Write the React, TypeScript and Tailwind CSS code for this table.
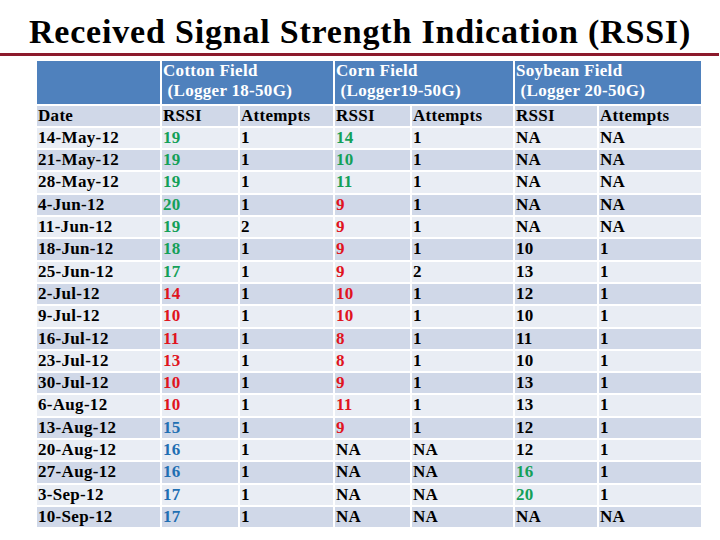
type Cell = { v: string; c?: "g" | "r" | "b" };

const GREEN = "text-[#14a058]";
const RED = "text-[#e0141e]";
const BLUE = "text-[#1f6fb2]";

const dates = [
  "14-May-12", "21-May-12", "28-May-12", "4-Jun-12", "11-Jun-12", "18-Jun-12",
  "25-Jun-12", "2-Jul-12", "9-Jul-12", "16-Jul-12", "23-Jul-12", "30-Jul-12",
  "6-Aug-12", "13-Aug-12", "20-Aug-12", "27-Aug-12", "3-Sep-12", "10-Sep-12",
];

const mk = (list: string, color: (i: number) => Cell["c"]) =>
  list.split(",").map((v, i) => ({ v, c: color(i) }));

const cottonRssi = mk("19,19,19,20,19,18,17,14,10,11,13,10,10,15,16,16,17,17", (i) =>
  i < 7 ? "g" : i < 13 ? "r" : "b"
);
const cottonAtt = mk("1,1,1,1,2,1,1,1,1,1,1,1,1,1,1,1,1,1", () => undefined);
const cornRssi = mk("14,10,11,9,9,9,9,10,10,8,8,9,11,9,NA,NA,NA,NA", (i) =>
  i < 3 ? "g" : i < 14 ? "r" : undefined
);
const cornAtt = mk("1,1,1,1,1,1,2,1,1,1,1,1,1,1,NA,NA,NA,NA", () => undefined);
const soyRssi = mk("NA,NA,NA,NA,NA,10,13,12,10,11,10,13,13,12,12,16,20,NA", (i) =>
  i === 15 || i === 16 ? "g" : undefined
);
const soyAtt = mk("NA,NA,NA,NA,NA,1,1,1,1,1,1,1,1,1,1,1,1,NA", () => undefined);

function colorClass(c?: Cell["c"]) {
  if (c === "g") return GREEN;
  if (c === "r") return RED;
  if (c === "b") return BLUE;
  return "text-black";
}

function Field({ name, logger }: { name: string; logger: string }) {
  return (
    <div className="col-span-2 h-[42.6px] bg-[#4f81bd] pl-[1px] text-white whitespace-pre">
      <div>{name}</div>
      <div>{logger}</div>
    </div>
  );
}

export default function App() {
  const sub = "h-[20.3px] bg-[#d0d8e8] pl-[1px]";
  return (
    <div className="w-[720px] h-[540px] bg-white overflow-hidden [font-family:Liberation_Serif,Times_New_Roman,serif]">
      <h1 className="pt-[15px] text-center text-[34px] leading-[34px] font-bold tracking-[0.8px] text-black">
        Received Signal Strength Indication (RSSI)
      </h1>
      <div className="mt-[4px] h-[3px] w-[719px] bg-[#8c1a2c]" />
      <div className="ml-[37px] mt-[5px] grid grid-cols-[123px_76px_93px_75px_101px_82px_102px] gap-[2px] text-[17px] leading-[20px] font-bold tracking-[0.3px]">
        <div className="h-[42.6px] bg-[#4f81bd]" />
        <Field name="Cotton Field" logger=" (Logger 18-50G)" />
        <Field name="Corn Field" logger=" (Logger19-50G)" />
        <Field name="Soybean Field" logger=" (Logger 20-50G)" />

        <div className={sub}>Date</div>
        <div className={sub}>RSSI</div>
        <div className={sub}>Attempts</div>
        <div className={sub}>RSSI</div>
        <div className={sub}>Attempts</div>
        <div className={sub}>RSSI</div>
        <div className={sub}>Attempts</div>

        {dates.map((d, i) => {
          const bg = i % 2 === 0 ? "bg-[#e9edf4]" : "bg-[#d0d8e8]";
          const cells = [cottonRssi[i], cottonAtt[i], cornRssi[i], cornAtt[i], soyRssi[i], soyAtt[i]];
          return [
            <div key={d} className={`h-[20.3px] pl-[1px] ${bg}`}>
              {d}
            </div>,
            ...cells.map((c, j) => (
              <div key={d + j} className={`h-[20.3px] pl-[1px] ${bg} ${colorClass(c.c)}`}>
                {c.v}
              </div>
            )),
          ];
        })}
      </div>
    </div>
  );
}
